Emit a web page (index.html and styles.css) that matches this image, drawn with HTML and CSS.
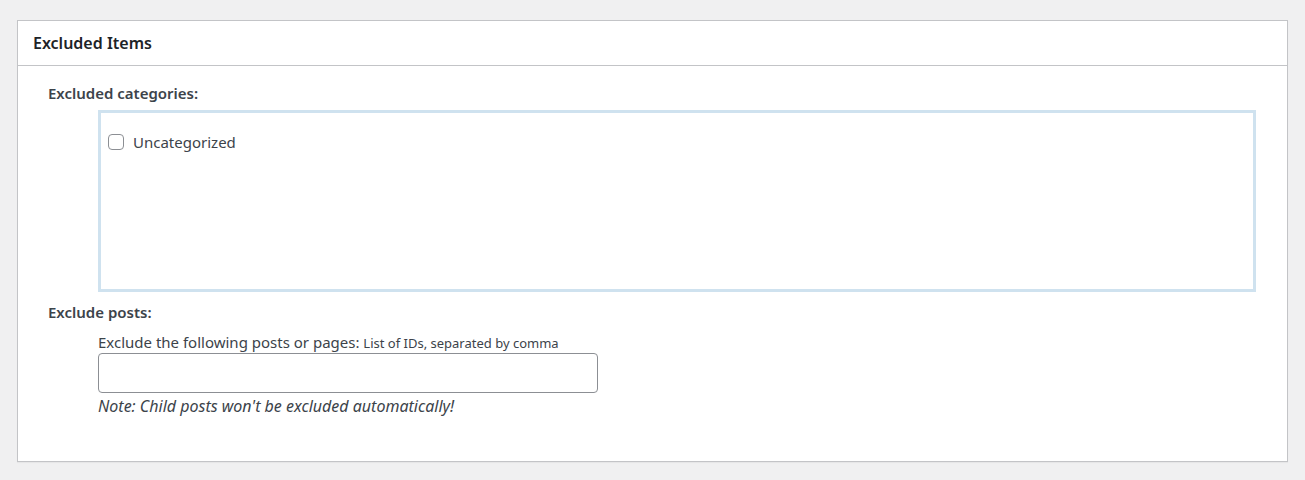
FILE: index.html
```html
<!DOCTYPE html>
<html lang="en">
<head>
  <meta charset="UTF-8">
  <meta name="viewport" content="width=device-width, initial-scale=1.0">
  <title>Excluded Items</title>
  <link rel="stylesheet" href="styles.css">
</head>
<body>
  <div class="postbox">
    <div class="postbox-header">
      <h2>Excluded Items</h2>
    </div>

    <div class="inside">
      <div class="field">
        <h4 class="field-title">Excluded categories:</h4>
        <div class="cat-box">
          <label class="cat-item">
            <input type="checkbox" class="checkbox" />
            <span>Uncategorized</span>
          </label>
        </div>
      </div>

      <div class="field">
        <h4 class="field-title">Exclude posts:</h4>
        <div class="field-body">
          <label for="excludePosts" class="post-label">Exclude the following posts or pages: <small>List of IDs, separated by comma</small></label>
          <input type="text" id="excludePosts" class="text-input" />
          <p class="note">Note: Child posts won't be excluded automatically!</p>
        </div>
      </div>
    </div>
  </div>
</body>
</html>
```

FILE: styles.css
```css
body {
  margin: 0;
  padding: 20px 17px;
  background: #f0f0f1;
  font-family: "Noto Sans", "Open Sans", sans-serif;
  font-size: 15px;
  color: #3c434a;
}

.postbox {
  background: #ffffff;
  border: 1px solid #c3c4c7;
  box-shadow: 0 1px 1px rgba(0, 0, 0, 0.04);
  height: 442px;
  box-sizing: border-box;
}

.postbox-header {
  height: 44px;
  border-bottom: 1px solid #c3c4c7;
  display: flex;
  align-items: center;
  padding: 0 15px;
}

.postbox-header h2 {
  margin: 0;
  font-size: 16px;
  font-weight: 600;
  color: #1d2327;
}

.inside {
  padding: 17px 30px 0;
}

.field-title {
  margin: 0;
  font-size: 15px;
  font-weight: 600;
  line-height: 20px;
  color: #3c434a;
}

.cat-box {
  margin: 7px 0 0 50px;
  width: 1158px;
  height: 182px;
  box-sizing: border-box;
  border: 3px solid #cfe2ef;
  padding: 19px 7px;
}

.cat-item {
  display: flex;
  align-items: center;
  gap: 9px;
}

.checkbox {
  appearance: none;
  margin: 0;
  width: 16px;
  height: 16px;
  border: 1px solid #8c8f94;
  border-radius: 4px;
  background: #ffffff;
}

.field + .field {
  margin-top: 10px;
}

.field-body {
  margin: 10px 0 0 50px;
}

.post-label {
  display: block;
  line-height: 20px;
}

.post-label small {
  font-size: 13px;
}

.text-input {
  display: block;
  width: 500px;
  height: 40px;
  box-sizing: border-box;
  margin: 0;
  border: 1px solid #8c8f94;
  border-radius: 4px;
  font: inherit;
}

.note {
  margin: 3px 0 0;
  font-style: italic;
  font-size: 16px;
  line-height: 20px;
}
```
